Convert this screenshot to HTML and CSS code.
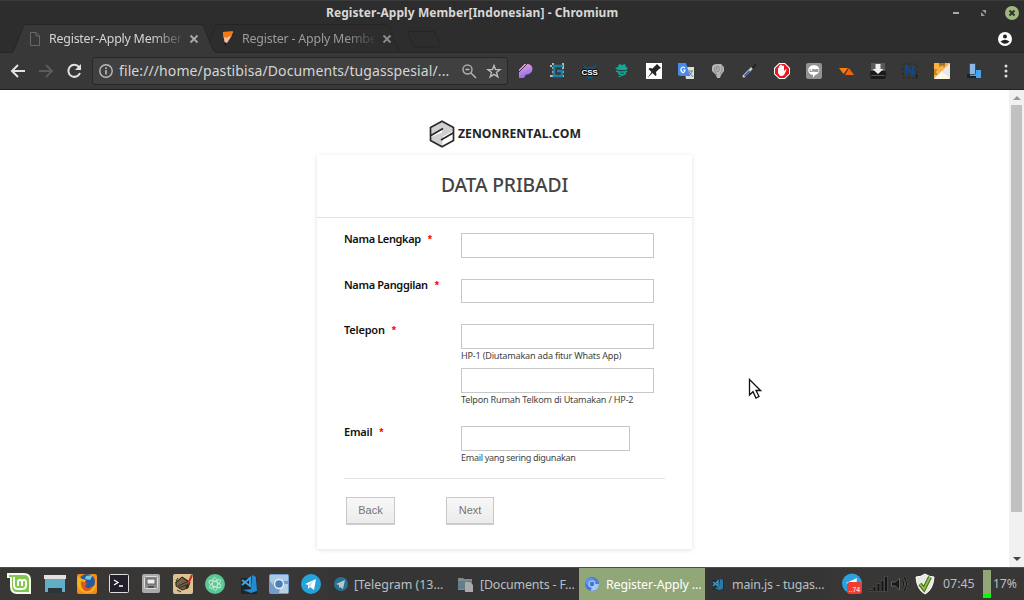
FILE: index.html
```html
<!DOCTYPE html>
<html lang="id">
<head>
<meta charset="utf-8">
<title>Register-Apply Member[Indonesian]</title>
<link rel="stylesheet" href="styles.css">
</head>
<body>
<header class="titlebar">
  <span class="window-title">Register-Apply Member[Indonesian] - Chromium</span>
  <svg class="window-controls" viewBox="0 0 80 24">
    <path d="M9 12h6" stroke="#aaa" stroke-width="2"/>
    <path d="M38 9h4v4zM37 11v4h4z" fill="#999"/>
    <circle cx="68" cy="12" r="7" fill="#a0b77f"/><path d="M65.500 9.500l5 5m0-5l-5 5" stroke="#30332c" stroke-width="2"/>
  </svg>
</header>
<nav class="tabs">
  <div class="tab active">
    <svg class="tab-shape" viewBox="0 0 206 29"><path d="M0 28.5Q2 28 3 26L12 3Q13 .5 16 .5H189Q192 .5 193 3L202 26Q203 28 206 28.5V29H0Z" fill="#383838"/><path d="M0 28.5Q2 28 3 26L12 3Q13 .5 16 .5H189Q192 .5 193 3L202 26Q203 28 206 28.5" fill="none" stroke="#252525"/></svg>
    <svg class="favicon" viewBox="0 0 16 16"><path d="M3.500 1.500H9L12.500 5V14.500H3.500ZM9 1.500V5H12.500" fill="none" stroke="#686868"/></svg>
    <span class="tab-title">Register-Apply Member</span>
    <svg class="tab-close" viewBox="0 0 10 10"><path d="M1.500 1.500l7 7m0-7l-7 7" stroke="#aaa" stroke-width="1.800"/></svg>
  </div>
  <div class="tab second">
    <svg class="tab-shape" viewBox="0 0 206 29"><path d="M4 22L11 3Q12 .5 15 .5H181Q184 .5 185 3L194 26Q195 28 198 28.500" fill="none" stroke="#252525"/></svg>
    <svg class="favicon" viewBox="0 0 16 16"><path d="M3 1l10-.5L11 6 7 12 5 14 4 8Z" fill="#efc0a5"/><path d="M3 1l10-.5L11 6 9 5 7 7 5 6 3.500 7Z" fill="#f57813"/><path d="M4 11l3 1-2 3Z" fill="#111"/></svg>
    <span class="tab-title">Register - Apply Membe</span>
    <svg class="tab-close" viewBox="0 0 10 10"><path d="M1.500 1.500l7 7m0-7l-7 7" stroke="#8c8c8c" stroke-width="1.800"/></svg>
  </div>
  <svg class="new-tab" viewBox="0 0 34 17"><path d="M1.500.5H26Q28 .5 29 3L33 13Q34 16 31 16H9Q7 16 6 14L1 3Q0 .5 2 .5Z" fill="#2d2d2d" stroke="#252525"/></svg>
  <svg class="profile" viewBox="0 0 14 14"><circle cx="7" cy="7" r="7" fill="#fff"/><circle cx="7" cy="4.500" r="2" fill="#222"/><path d="M2.500 9.500Q7 6 11.500 9.500 7 14 2.500 9.500" fill="#222"/></svg>
</nav>
<div class="toolbar">
  <svg class="navigation" viewBox="0 0 92 37">
    <path d="M25 18H12m6-6l-6 6 6 6" fill="none" stroke="#e2e2e2" stroke-width="2"/>
    <path d="M39 18H52m-6-6l6 6-6 6" fill="none" stroke="#5b5b5b" stroke-width="2"/>
    <path d="M79 14A6 6 0 1 0 80 20" fill="none" stroke="#e2e2e2" stroke-width="2"/><path d="M81 11v6h-6Z" fill="#e2e2e2"/>
  </svg>
  <div class="address">
    <svg class="info" viewBox="0 0 14 14"><circle cx="7" cy="7" r="6.200" fill="none" stroke="#bbb" stroke-width="1.400"/><path d="M7 6v4.500M7 3.300v1.600" stroke="#bbb" stroke-width="1.600"/></svg>
    <span class="url">file:///home/pastibisa/Documents/tugasspesial/...</span>
    <svg class="address-actions" viewBox="0 0 40 16"><circle cx="5.500" cy="6.500" r="4.500" fill="none" stroke="#aaa" stroke-width="1.500"/><path d="M9 10l5 5M3.500 6.500h4M32 2.500l1.500 4 4.500.1-3.500 2.800 1.300 4.400-3.800-2.500-3.800 2.500 1.300-4.400-3.500-2.800 4.500-.1Z" fill="none" stroke="#bbb" stroke-width="1.400"/></svg>
  </div>
  <div class="extensions">
    <svg viewBox="0 0 16 16"><defs><linearGradient id="purple" x2=".4" y2="1"><stop stop-color="#fba4d4"/><stop offset="1" stop-color="#8a6cf0"/></linearGradient></defs><path d="M1 6L6 1H9C17 1 16 12 8 11.500L6 15H1Z" fill="url(#purple)"/><path d="M1 3l2-2M0 7l6-6M1 9l8-8" stroke="#383838" stroke-width="1"/></svg>
    <svg viewBox="0 0 16 16"><path d="M3 0v16M13 0v16M0 3h16M0 13h16" stroke="#bbb" stroke-width="2" stroke-dasharray="2 2"/><path d="M13 3H4v10h8V8H7" fill="none" stroke="#207fa9" stroke-width="2.500"/></svg>
    <svg viewBox="0 0 16 16"><path d="M1 1l4 3h6l4-3-2 6H3ZM5 12h6l-1 4H6Z" fill="#17506a"/><text x="-.5" y="11.500" class="css-icon">CSS</text></svg>
    <svg viewBox="0 0 16 16"><path d="M4 4l1-3 3 1 3-1 1 3 2 1-2 2H4L1 5Z" fill="#10a899"/><path d="M2 8l3 1h6l2-1M5 9v2l3 1 3-1V9M8 11l-3 3" fill="none" stroke="#10a899" stroke-width="1.700"/></svg>
    <svg viewBox="0 0 16 16"><path d="M0 0h16v16H0Z" fill="#fff"/><path d="M11 1l4 4-2 1-3 3 .5 3-1 1-3-3-5 5 4-6-3-3 1-1 3 .5 3-3Z" fill="#252525"/></svg>
    <svg viewBox="0 0 16 16"><path d="M6 4h10v12H8Z" fill="#ddd"/><path d="M0 0h8l4 13H2Q0 13 0 11Z" fill="#4889ed"/><path d="M7 5Q5 3 3.500 5T4 9t3-2H5" fill="none" stroke="#fff" stroke-width="1.200"/><path d="M10 8h5m-1 0q-1 4-4 5m1-4 4 5" fill="none" stroke="#68858c"/></svg>
    <svg viewBox="0 0 16 16"><path d="M3 2l3-1h5l3 3v4l-3 4-1 3H7L6 12 2 8 2 4Z" fill="#b6b6b6"/><path d="M7 12Q3 7 5 4m2 0q-2 3 1 5 2-1 1-5-1-2-3 0m6-1q1 5-2 8" fill="none" stroke="#777" stroke-width=".7"/></svg>
    <svg viewBox="0 0 16 16"><path d="M9 7l5-6" stroke="#202224" stroke-width="2"/><path d="M1 14l9-9" stroke="#c8c7cd" stroke-width="2.500"/><path d="M2.500 13l5-5" stroke="#2854c7" stroke-width="1.600"/></svg>
    <svg viewBox="0 0 16 16"><path d="M5 0h6l5 5v6l-5 5H5l-5-5V5Z" fill="#fff"/><path d="M5.500 1h5L15 5.500v5L10.500 15h-5L1 10.500v-5Z" fill="#e5171a"/><path d="M4 8V5q1-1 1 0v2-4q1-1 1 0v3-4q1-1 2 0v4-3q1-1 2 0v5l2-2q1 0 0 2l-2 4-2 1H6l-2-3Z" fill="#fff"/></svg>
    <svg viewBox="0 0 16 16"><rect width="16" height="16" rx="2" fill="#929292"/><path d="M8 2C15 2 15 11 9 12L7 15V12C0 11 1 2 8 2" fill="#fff"/><text x="3.500" y="8.500" class="line-icon">LINE</text></svg>
    <svg viewBox="0 0 16 16"><path d="M1 5h9L5.500 11Z" fill="#ff7a0b"/><path d="M11 5l5 7H7Z" fill="#f26406"/></svg>
    <svg viewBox="0 0 16 16"><path d="M1 0h14l1 12-1 4H1l-1-4Z" fill="#191919"/><path d="M1 0h14l.5 8H.5Z" fill="#5a5a5a"/><path d="M1 12.500h14" stroke="#555"/><path d="M5.500 1h5v5h3L8 11 2.500 6h3Z" fill="#eee"/></svg>
    <svg viewBox="0 0 16 16"><path d="M1 1h14v14H1Z" fill="none" stroke="#252b30" stroke-dasharray="3 2"/><path d="M4.500 11.500V3.500L11 11V3.500" fill="none" stroke="#064b9a" stroke-width="2.200"/><path d="M13 13h3m-1.500-2v5" stroke="#202020"/></svg>
    <svg viewBox="0 0 16 16"><rect width="16" height="16" rx="1" fill="#e8e8e8"/><path d="M0 0h16L0 16Z" fill="#fcb040"/><path d="M8 8l8 8H0Z" fill="#fff7e6"/><path d="M5 1h6M6 0v4m2-4v3m2-3v4M0 7h3M0 9h2M0 11h3" stroke="#704815" stroke-width=".8"/></svg>
    <svg viewBox="0 0 16 16"><path d="M4 7h11v8H1v-4h3Z" fill="#4aa3ed"/><rect x="3.500" y=".5" width="6" height="11" rx="1" fill="#8bb9e7" stroke="#2d5373"/><path d="M1 11h3v2h6v2H1Z" fill="#17212a"/></svg>
    <svg viewBox="0 0 16 16"><circle cx="8" cy="3" r="1.500" fill="#ddd"/><circle cx="8" cy="8" r="1.500" fill="#ddd"/><circle cx="8" cy="13" r="1.500" fill="#ddd"/></svg>
  </div>
</div>
<div class="viewport">
  <main class="page">
    <div class="brand">
      <svg viewBox="0 0 26 28"><path d="M13 1.200L24.500 7.500V20.500L13 26.800 1.500 20.500V7.500Z" fill="#fff"/><path d="M13 2L24 8V11L13 17V9L2 16V8ZM2 17L14 12v7L13 26 2 20Z" fill="#d0d0d0"/><path d="M13 1.200L24.500 7.500V20.500L13 26.800 1.500 20.500V7.500ZM2 15.500L14 8.500M12 20L24 13" fill="none" stroke="#292929" stroke-width="1.700"/></svg>
      <span>ZENONRENTAL.COM</span>
    </div>
    <form class="card">
      <h1>DATA PRIBADI</h1>
      <div class="fields">
        <div class="field"><label>Nama Lengkap<b>*</b></label><div><input type="text"></div></div>
        <div class="field nickname"><label>Nama Panggilan<b>*</b></label><div><input type="text"></div></div>
        <div class="field phone"><label>Telepon<b>*</b></label><div><input type="text"><small class="mobile-help">HP-1 (Diutamakan ada fitur Whats App)</small><input type="text"><small class="home-help">Telpon Rumah Telkom di Utamakan / HP-2</small></div></div>
        <div class="field email"><label>Email<b>*</b></label><div><input type="text"><small class="email-help">Email yang sering digunakan</small></div></div>
      </div>
      <div class="actions"><button type="button">Back</button><button type="button" class="next">Next</button></div>
    </form>
  </main>
  <div class="scrollbar"><svg viewBox="0 0 15 15"><path d="M4 10h8L8 6Z" fill="#969696"/></svg><div class="thumb"></div><svg class="scroll-down" viewBox="0 0 15 15"><path d="M4 5h8L8 9Z" fill="#444"/></svg></div>
  <svg class="pointer" viewBox="0 0 14 22"><path d="M1.500 1.500V17L5 13.700 8 20l3-1.500L8 12.500h4.500Z" fill="#fff" stroke="#111" stroke-width="1.300"/></svg>
</div>
<footer class="taskbar">
  <div class="launchers">
    <svg viewBox="0 0 32 32"><path d="M7 5H24q7 0 7 7v14H17Q10 26 10 18V10H7Z" fill="#f4fbed"/><path d="M9 7H24q5 0 5 5v12H17q-5 0-5-6V9H9Z" fill="#83c74e"/><path d="M14 9v8q0 4 4 4h4q4 0 4-4v-3q0-2-2-2t-2 2v4m0-4q0-2-2-2t-2 2v4" fill="none" stroke="#fff" stroke-width="2"/></svg>
    <svg viewBox="0 0 32 32"><path d="M12 7h22v4H12Z" fill="#e5e0df"/><path d="M13 11h20v13H13Z" fill="#61aec7"/><path d="M16 20h14v5H16Z" fill="#29343b"/></svg>
    <svg viewBox="0 0 32 32"><rect x="13" y="6" width="20" height="20" rx="2" fill="#f58a16"/><circle cx="23" cy="14" r="8" fill="#285a9c"/><path d="M14 8l4 3 4 1-2 4 2 5q5 1 9-4l1-7q2 14-9 15-9-1-10-10Z" fill="#f6b51c"/><path d="M17 13l6 2-2 4q5 3 8-2-1 7-8 6-5-3-4-10" fill="#dc591c"/><path d="M22 8l7-1-3 5-5-1Z" fill="#75c5df"/></svg>
    <svg viewBox="0 0 32 32"><rect x="13.500" y="6.500" width="19" height="18" rx="1" fill="#23202b" stroke="#ddd"/><path d="M18 12l4 2.500-4 2.500m5 1h4" fill="none" stroke="#fff" stroke-width="1.300"/></svg>
    <svg viewBox="0 0 32 32"><rect x="14" y="6" width="18" height="19" rx="2" fill="#aaa"/><rect x="16.500" y="8.500" width="13" height="12" rx="1" fill="#888" stroke="#ddd"/><rect x="19" y="11" width="8" height="5" fill="#e9eef1" stroke="#666"/><path d="M20 18h6v2h-6Z" fill="#555"/></svg>
    <svg viewBox="0 0 32 32"><rect x="13" y="6" width="20" height="20" rx="2" fill="#dcc391"/><path d="M16 15l6-6 8 5-2 6-6 2-6-4Z" fill="#776245" stroke="#33291e"/><path d="M15 15l7-6 7 6M18 18l9-4m-8 6 7-3M18 10l-2 3m1 9 4 2" fill="none" stroke="#332a22"/><path d="M26 20l2-4" stroke="#332a22" stroke-width="2"/><path d="M28 16l4-9" stroke="#c42d20" stroke-width="2"/></svg>
    <svg viewBox="0 0 32 32"><circle cx="23" cy="16" r="10" fill="#5bc792"/><g fill="none" stroke="#c7ebd7" stroke-width=".9"><ellipse cx="23" cy="16" rx="6.500" ry="2.500" transform="rotate(25 23 16)"/><ellipse cx="23" cy="16" rx="6.500" ry="2.500" transform="rotate(85 23 16)"/><ellipse cx="23" cy="16" rx="6.500" ry="2.500" transform="rotate(145 23 16)"/></g></svg>
    <svg viewBox="0 0 32 32"><path d="M17 10h16v16H17Z" fill="#202426"/><path d="M28 7l4 2 1 14-6 2-8-3 8-1Z" fill="#238bd0"/><path d="M18 12l8 6V10l-8 7" fill="none" stroke="#3fa8e8" stroke-width="1.800"/></svg>
    <svg viewBox="0 0 32 32"><rect x="13" y="6" width="20" height="20" rx="2" fill="#719ccb"/><path d="M14 7h18v6H22Q17 12 17 17L14 13Z" fill="#a9c9e9"/><path d="M24 20l5-4h3v9h-9Z" fill="#b9cfe6"/><circle cx="23" cy="16" r="4.500" fill="#4a7fb9" stroke="#eee" stroke-width="1.500"/></svg>
    <svg viewBox="0 0 32 32"><circle cx="23" cy="16" r="10" fill="#27a3dc"/><path d="M17 16l11-5-2 11-4-3-2 2v-4Z" fill="#fff"/><path d="M20 17l5-4-3 6Z" fill="#bcdcea"/></svg>
  </div>
  <div class="task telegram"><svg viewBox="0 0 16 16"><circle cx="8" cy="8" r="7" fill="#287291"/><path d="M3 8l9-4-2 9-3-2-1 1V9Z" fill="#b7c8cf"/></svg><span>[Telegram (13...</span></div>
  <div class="task documents"><svg viewBox="0 0 16 16"><path d="M0 2h5l1 1h8v11H0Z" fill="#85898a"/><path d="M0 5h14v8H0Z" fill="#607f8b"/><path d="M7 6h5l3 3v7H7Z" fill="#aaa"/></svg><span>[Documents - F...</span></div>
  <div class="task current"><svg viewBox="0 0 16 16"><circle cx="8" cy="8" r="7" fill="#447ad9"/><path d="M1 6q4-8 13 0L8 5 5 11Z" fill="#6093ef"/><path d="M8 8h7q0 7-8 7Z" fill="#a8c6fa"/><circle cx="8" cy="8" r="3" fill="#4479cf" stroke="#bcd3ff" stroke-width="1.100"/></svg><span>Register-Apply ...</span></div>
  <div class="task code"><svg viewBox="0 0 16 16"><path d="M2 4h12v10H3Z" fill="#202c34"/><path d="M10 3l3 1v9l-4 1-5-2 5-1Z" fill="#287ca9"/><path d="M3 6l5 4V5l-5 5" fill="none" stroke="#3f9aca" stroke-width="1.400"/></svg><span>main.js - tugas...</span></div>
  <div class="tray">
    <svg viewBox="0 0 105 32"><circle cx="17" cy="15.500" r="10" fill="#2ba2df"/><path d="M11 15l11-5-1 10Z" fill="#eef8fc"/><rect x="12" y="14" width="15" height="12" rx="3" fill="#ef3d36"/><text x="13.500" y="23.500" class="badge-text">..74</text><path d="M35.500 24v-3M39.500 24v-6M43.500 24V15M47.500 24V12M51 24V8" stroke="#6a6a6a" stroke-width="3"/><path d="M35.500 23.500v-2M39.500 23.500v-5M43.500 23.500V15.500M47.500 23.500V12.500M51 23.500V8.500" stroke="#141414" stroke-width="2.300"/><path d="M56.500 14h4l4-4v12l-4-4h-4Z" fill="#191919" stroke="#777" stroke-width=".7"/><path d="M67 12q3 4 0 8m2-11q5 7 0 14" fill="none" stroke="#777" stroke-width="2"/><path d="M67 12q3 4 0 8m2-11q5 7 0 14" fill="none" stroke="#131313" stroke-width="1.300"/><path d="M90 6q4 3 9 3-1 13-9 17-8-4-9-17 5 0 9-3" fill="#e8eadf" stroke="#fff"/><path d="M85 16l4 5 6-12" fill="none" stroke="#476b24" stroke-width="4"/><path d="M85 16l4 5 6-12" fill="none" stroke="#8ebc48" stroke-width="2"/></svg>
    <time>07:45</time><div class="battery"><i></i></div><span class="percent">17%</span>
  </div>
</footer>
</body>
</html>
```
FILE: styles.css
```css
*{box-sizing:border-box}
body{margin:0;width:1024px;height:600px;display:flex;flex-direction:column;overflow:hidden;background:#fff;font-family:"Noto Sans",sans-serif}
svg{display:block;flex:none}
.titlebar{height:24px;background:#2d2d2d;border-top:1px solid #3a3a3a;display:flex;align-items:center;justify-content:space-between;padding-left:326px}
.window-title{font-size:12px;font-weight:700;color:#d8d8d8;white-space:nowrap;letter-spacing:.07px;line-height:23px}
.window-controls{width:80px;height:24px}
.tabs{height:29px;background:#2d2d2d;display:flex;border-bottom:1px solid #252525;padding-left:11px}
.tab{width:206px;height:29px;position:relative;display:flex;align-items:center;padding:0 17px;flex:none;color:#d5d5d5}
.tab.active{z-index:1}
.tab.second{margin-left:-13px;color:#9c9c9c}
.tab-shape{position:absolute;inset:0;width:206px;height:29px}
.favicon{position:relative;width:16px;height:16px;margin-left:-1px}
.tab-title{position:relative;width:132px;margin-left:6px;font-size:12.4px;letter-spacing:-.22px;white-space:nowrap;line-height:26px;mask-image:linear-gradient(90deg,#000 78%,rgba(0,0,0,.15))}
.second .tab-title{letter-spacing:-.19px}
.tab-close{position:relative;width:10px;height:10px;margin-left:8px}
.new-tab{width:34px;height:17px;margin:7px 0 0 -3px}
.profile{width:14px;height:14px;margin:8px 12px 0 auto}
.toolbar{height:37px;background:#383838;border-bottom:1px solid #281e25;display:flex}
.navigation{width:92px;height:37px}
.address{width:416px;height:28px;margin-top:4px;border:1px solid #272727;border-radius:3px;background:#404040;display:flex;align-items:center;padding-left:6px}
.info{width:14px;height:14px}
.url{width:341px;margin-left:6px;font-size:14px;letter-spacing:.1px;color:#d5d5d5;line-height:26px;white-space:nowrap}
.address-actions{width:40px;height:16px;margin-left:2px}
.extensions{display:flex;gap:16px;padding:10px 0 0 10px}
.extensions svg{width:16px;height:16px;overflow:visible}
.css-icon{font:700 8px "Liberation Sans",sans-serif;fill:#fff;stroke:#080808;stroke-width:2px;paint-order:stroke}
.line-icon{font:700 4px "Liberation Sans",sans-serif;fill:#555}
.viewport{height:477px;display:flex;position:relative;background:#fff}
.page{width:1009px;padding-top:30px}
.brand{height:35px;margin-left:429px;display:flex}
.brand svg{width:26px;height:28px}
.brand span{margin-left:3px;font:700 12.2px/28px "Open Sans",sans-serif;color:#242424}
.card{width:375px;height:394px;margin-left:317px;background:#fff;box-shadow:0 1px 5px rgba(0,0,0,.12)}
h1{height:63px;margin:0;border-bottom:1px solid #e2e2e2;text-align:center;font:500 19.3px/60px "Noto Sans",sans-serif;letter-spacing:-.15px;color:#444}
.fields{height:261px;margin:0 27px;padding-top:15px;border-bottom:1px solid #e1e1e1}
.field{display:flex;height:46px}
.field.nickname{height:45px}
.field.phone{height:102px}
label{width:117px;font:600 11px/12px "Noto Sans",sans-serif;letter-spacing:-.36px;color:#111}
label b{color:#f00;font:700 11px/12px "Liberation Sans",sans-serif;margin-left:7px}
.phone label,.email label{letter-spacing:-.2px}
input{display:block;width:193px;height:25px;padding:2px;border:1px solid #c7c7c7;background:#fff}
.nickname input{height:24px}
.email input{width:169px}
small{display:block;height:19px;font:9.1px/13px "Noto Sans",sans-serif;letter-spacing:-.2px;color:#444;white-space:nowrap}
.email-help{letter-spacing:-.34px}
.actions{display:flex;padding:18px 0 0 29px;gap:51px}
button{width:49px;height:28px;padding:0 0 1px;border:1px solid #c8c8c8;border-bottom:2px solid #ccc;background:linear-gradient(#f8f8f8,#ebebeb);font:11px "Liberation Sans",sans-serif;color:#747474}
button.next{width:48px}
.scrollbar{width:15px;background:#f1f1f1;display:flex;flex-direction:column}
.scrollbar svg{width:15px;height:15px}
.thumb{height:407px;background:#c1c1c1;margin:0 2px}
.scrollbar .scroll-down{margin-top:auto}
.pointer{position:absolute;left:748px;top:288px;width:14px;height:22px}
.taskbar{height:33px;background:#383736;border-top:1px solid #505050;display:flex}
.launchers{display:flex;width:328px}
.launchers svg{width:32px;height:32px;overflow:visible}
.task{width:126px;height:32px;display:flex;align-items:center;padding-left:5px;font-size:12.4px;letter-spacing:-.14px;color:#b8c0c3;white-space:nowrap;background:#353535}
.task svg{width:16px;height:16px}
.task span{margin-left:6px}
.telegram{width:125px}
.telegram span{margin-left:5px;letter-spacing:0}
.current{background:#91a777;color:#fff}
.tray{width:193px;display:flex;color:#b8bdc3;font-size:13px;line-height:31px}
.tray>svg{width:105px;height:32px;margin-left:4px}
.badge-text{font:7px "Liberation Sans",sans-serif;fill:#fff}
.tray time{width:40px;margin-left:3px;font-size:12.4px}
.battery{width:8px;height:28px;margin-top:2px;background:#91a777;display:flex;align-items:flex-end}
.battery i{width:8px;height:4px;background:#0f0}
.percent{font-size:12.2px;margin-left:2px;letter-spacing:-.1px}
```
